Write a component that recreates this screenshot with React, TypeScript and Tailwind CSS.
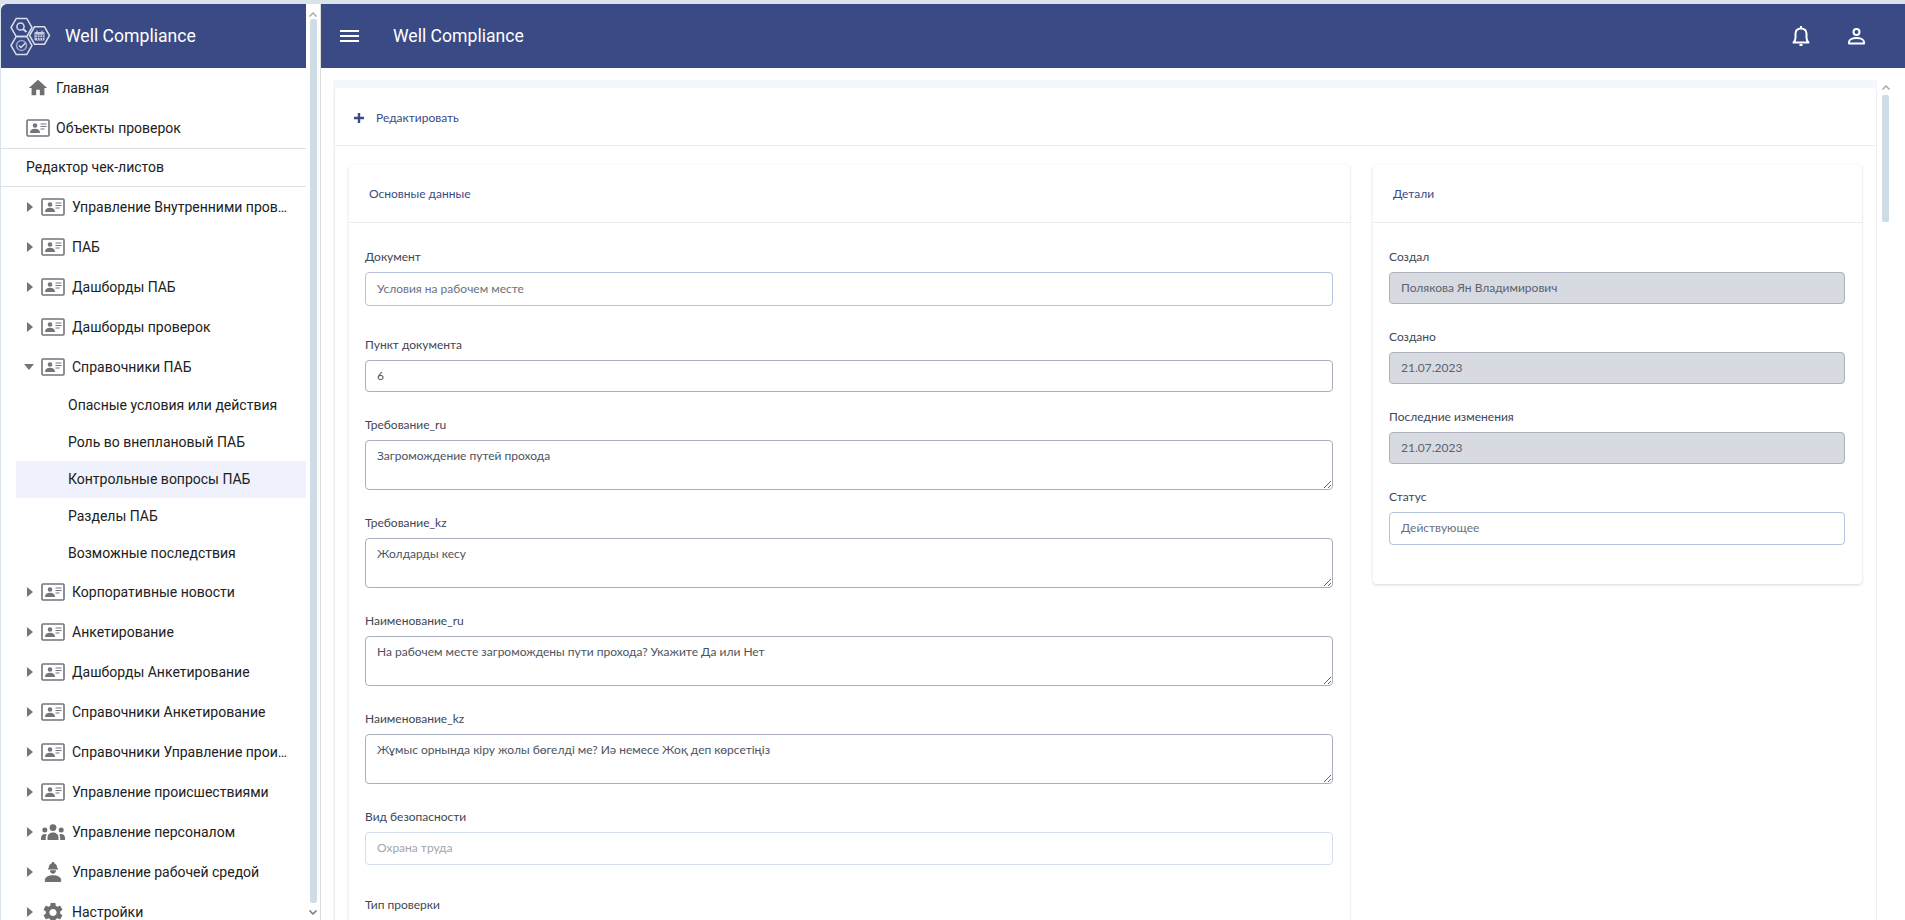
import React from "react";
import { MdHome, MdSettings } from "react-icons/md";

const Hex = ({ cx, cy, r }: { cx: number; cy: number; r: number }) => {
  const h = r * 0.866;
  return (
    <polygon
      points={`${cx - r},${cy} ${cx - r / 2},${cy - h} ${cx + r / 2},${cy - h} ${cx + r},${cy} ${cx + r / 2},${cy + h} ${cx - r / 2},${cy + h}`}
      fill="none"
      stroke="#d9dcea"
      strokeWidth="1.5"
    />
  );
};

const Logo = () => (
  <svg width="42" height="42" viewBox="8 15 42 42" className="shrink-0">
    <Hex cx={20.5} cy={27.5} r={10.5} />
    <Hex cx={38.5} cy={35.5} r={10} />
    <Hex cx={20.5} cy={45.5} r={10.5} />
    <circle cx="19.5" cy="26.5" r="3.6" fill="none" stroke="#d9dcea" strokeWidth="1.5" />
    <path d="M22 29l3.5 3" stroke="#d9dcea" strokeWidth="2" />
    <rect x="33.5" y="32" width="10" height="8.5" rx="1" fill="#c9cde0" />
    <path d="M36 30.5v2M41 30.5v2" stroke="#c9cde0" strokeWidth="1.2" />
    <path d="M34 35h9M34 37.5h9M36.5 35v5M39 35v5M41.5 35v5" stroke="#3a4a85" strokeWidth="0.7" />
    <circle cx="20.5" cy="45.5" r="5" fill="none" stroke="#9aa3c6" strokeWidth="1.6" />
    <path d="M18 45.5l2 2 4.5-4.5" fill="none" stroke="#d9dcea" strokeWidth="1.5" />
  </svg>
);

const IdCard = () => (
  <svg width="24" height="18" viewBox="0 0 24 18" className="shrink-0">
    <rect x="1" y="1" width="22" height="16" rx="1" fill="none" stroke="#77727c" strokeWidth="1.6" />
    <circle cx="9" cy="6.5" r="2.3" fill="#77727c" />
    <path d="M4 14c0-3 2-4.2 5-4.2s5 1.2 5 4.2z" fill="#77727c" />
    <path d="M14.5 5h6M14.5 7.5h6M14.5 10h4" stroke="#77727c" strokeWidth="1" />
  </svg>
);

const People = () => (
  <svg width="24" height="16" viewBox="0 0 24 16" className="shrink-0" fill="#6f6f6f">
    <circle cx="12" cy="3.600" r="3.400" />
    <circle cx="3.800" cy="6" r="2.500" />
    <circle cx="20.200" cy="6" r="2.500" />
    <path d="M6.500 16v-2.500c0-3 2.500-5 5.500-5s5.500 2 5.500 5V16z" />
    <path d="M0 16v-2c0-2.500 1.800-4 3.800-4 .9 0 1.500.2 2 .5-.7 1-1 2-1 3.200V16z" />
    <path d="M24 16v-2c0-2.500-1.800-4-3.800-4-.9 0-1.500.2-2 .5.700 1 1 2 1 3.200V16z" />
  </svg>
);

const Worker = () => (
  <svg width="20" height="20" viewBox="3 1 18 21" className="shrink-0" fill="#6f6f6f">
    <path d="M7.5 7.5c0-3 1.700-4.800 3.400-5.200V1h2.200v1.300c1.700.4 3.400 2.200 3.400 5.200h.8v1.300h-10.600V7.500z" />
    <path d="M8.800 9.600h6.400c-.1 2.200-1.400 3.700-3.200 3.700s-3.100-1.500-3.200-3.700z" />
    <path d="M3.500 22v-2.500c0-2.600 3.800-4.600 8.500-4.600s8.500 2 8.500 4.600V22z" />
  </svg>
);

const Caret = ({ open }: { open?: boolean }) =>
  open ? (
    <svg width="10" height="6" viewBox="0 0 10 6" className="ml-[23px] mr-[7px] shrink-0">
      <path d="M0 0h10L5 6z" fill="#77727c" />
    </svg>
  ) : (
    <svg width="6" height="10" viewBox="0 0 6 10" className="ml-[26px] mr-2 shrink-0">
      <path d="M0 0l6 5-6 5z" fill="#77727c" />
    </svg>
  );

const TreeRow = ({
  label,
  icon = <IdCard />,
  open,
}: {
  label: string;
  icon?: React.ReactNode;
  open?: boolean;
}) => (
  <div className="flex h-10 shrink-0 items-center">
    <Caret open={open} />
    <div className="flex w-6 shrink-0 justify-center">{icon}</div>
    <span className="ml-[7px] w-[218px] truncate text-sm text-[#212121]">{label}</span>
  </div>
);

const SubRow = ({ label, active }: { label: string; active?: boolean }) => (
  <div className={`ml-[15px] flex h-[37px] shrink-0 items-center pb-[2px] pl-[52px] text-sm text-[#212121] ${active ? "bg-[#eff2fc]" : ""}`}>
    {label}
  </div>
);

const ScrollUp = () => (
  <svg width="8" height="5" viewBox="0 0 8 5" className="shrink-0">
    <path d="M0.500 4.500L4 1l3.500 3.500" fill="none" stroke="#a9a9a9" strokeWidth="1.500" />
  </svg>
);
const ScrollDown = () => (
  <svg width="8" height="5" viewBox="0 0 8 5" className="shrink-0">
    <path d="M0.500 0.500L4 4l3.500-3.500" fill="none" stroke="#777" strokeWidth="1.500" />
  </svg>
);

const Sidebar = () => (
  <aside className="flex h-full w-[319px] shrink-0">
    <div className="flex w-[305px] shrink-0 flex-col overflow-hidden bg-white font-['Roboto',sans-serif]">
      <div className="flex h-16 shrink-0 items-center rounded-tl-[6px] bg-[#3a4a85] pl-2 text-white">
        <Logo />
        <span className="ml-[14px] text-[17.6px]">Well Compliance</span>
      </div>
      <div className="flex h-10 shrink-0 items-center pl-[26px] text-sm text-[#212121]">
        <MdHome size={22} color="#6f6f6f" className="mr-[7px]" />
        Главная
      </div>
      <div className="flex h-10 shrink-0 items-center pl-[25px] text-sm text-[#212121]">
        <IdCard />
        <span className="ml-[6px]">Объекты проверок</span>
      </div>
      <div className="flex h-[39px] shrink-0 items-center border-y border-[#e0e0e0] pb-px pl-[25px] text-sm text-[#212121]">
        Редактор чек-листов
      </div>
      <TreeRow label="Управление Внутренними проверками" />
      <TreeRow label="ПАБ" />
      <TreeRow label="Дашборды ПАБ" />
      <TreeRow label="Дашборды проверок" />
      <TreeRow label="Справочники ПАБ" open />
      <SubRow label="Опасные условия или действия" />
      <SubRow label="Роль во внеплановый ПАБ" />
      <SubRow label="Контрольные вопросы ПАБ" active />
      <SubRow label="Разделы ПАБ" />
      <SubRow label="Возможные последствия" />
      <TreeRow label="Корпоративные новости" />
      <TreeRow label="Анкетирование" />
      <TreeRow label="Дашборды Анкетирование" />
      <TreeRow label="Справочники Анкетирование" />
      <TreeRow label="Справочники Управление происшествиями" />
      <TreeRow label="Управление происшествиями" />
      <TreeRow label="Управление персоналом" icon={<People />} />
      <TreeRow label="Управление рабочей средой" icon={<Worker />} />
      <TreeRow label="Настройки" icon={<MdSettings size={25} color="#6f6f6f" />} />
    </div>
    <div className="flex w-[14px] shrink-0 flex-col items-center bg-white pt-[8px]">
      <ScrollUp />
      <div className="mt-[2px] h-[884px] w-[7px] rounded-[2px] bg-[#cfdbe5]" />
      <div className="mt-[7px]">
        <ScrollDown />
      </div>
    </div>
  </aside>
);

const labelCls = "block text-xs leading-[15px] text-[#3f4654]";

const Field = ({
  label,
  value,
  h,
  mt,
  variant = "normal",
}: {
  label: string;
  value: string;
  h: string;
  mt: string;
  variant?: "normal" | "blue" | "muted" | "disabled";
}) => {
  const cls = {
    normal: "border-[#a9afbf] bg-white text-[#4c5361]",
    blue: "border-[#b5c3de] bg-white text-[#6b7280]",
    muted: "border-[#d5deec] bg-white text-[#a3a6ab]",
    disabled: "border-[#abb0bc] bg-[#d7dae0] text-[#5b6270]",
  }[variant];
  return (
    <div className={mt}>
      <label className={labelCls}>{label}</label>
      <input
        readOnly
        value={value}
        className={`mt-2 block w-full rounded-[4px] border px-[11px] pb-[2px] text-xs outline-none ${h} ${cls}`}
      />
    </div>
  );
};

const Area = ({ label, value, mt }: { label: string; value: string; mt: string }) => (
  <div className={mt}>
    <label className={labelCls}>{label}</label>
    <textarea
      readOnly
      value={value}
      className="mt-2 block h-[50px] w-full rounded-[4px] border border-[#a9afbf] bg-white px-[11px] pb-[9px] pt-[7px] text-xs text-[#4c5361] outline-none"
    />
  </div>
);

const Card = ({
  title,
  titlePl,
  className,
  children,
}: {
  title: string;
  titlePl: string;
  className: string;
  children: React.ReactNode;
}) => (
  <section className={`rounded-[4px] bg-white shadow-[0_1px_3px_rgba(60,70,100,0.22)] ${className}`}>
    <div className={`flex h-[58px] items-center border-b border-[#ececf1] text-xs text-[#3a4a85] ${titlePl}`}>{title}</div>
    {children}
  </section>
);

const Main = () => (
  <main className="flex h-full min-w-0 flex-1 flex-col border-l border-[#dcdcdc] bg-white">
    <header className="flex h-16 shrink-0 items-center bg-[#3a4a85] font-['Roboto',sans-serif] text-white">
      <svg width="19" height="13" viewBox="0 0 19 13" className="ml-[19px]">
        <path d="M0 1h19M0 6h19M0 11h19" stroke="#fff" strokeWidth="2" />
      </svg>
      <span className="ml-[34px] text-[17.6px]">Well Compliance</span>
      <svg width="20" height="22" viewBox="0 0 20 22" className="ml-auto">
        <path d="M2.500 17.500h15c-1.500-1.500-2-3-2-5V9c0-3.500-2.300-5.500-5.500-5.500S4.500 5.500 4.500 9v3.500c0 2-.5 3.500-2 5z" fill="none" stroke="#fff" strokeWidth="2" strokeLinejoin="round" />
        <path d="M10 1v2.500M8.500 20h3" stroke="#fff" strokeWidth="2" />
      </svg>
      <svg width="18" height="18" viewBox="0 0 18 18" className="ml-[37px] mr-[39px]">
        <circle cx="8.500" cy="5" r="3" fill="none" stroke="#fff" strokeWidth="2" />
        <path d="M1 16.500v-1.500c0-2.500 3.500-4 7.500-4s7.500 1.500 7.500 4v1.500z" fill="none" stroke="#fff" strokeWidth="2" strokeLinejoin="round" />
      </svg>
    </header>
    <div className="flex min-h-0 flex-1 overflow-hidden font-['Lato',sans-serif]">
      <div className="ml-3 mt-3 w-[1544px] shrink-0 bg-[#f4f7fe] pt-2">
        <div className="ml-px rounded-t-[4px] border-x border-[#eeeef2] bg-white pb-10">
          <div className="flex h-[58px] items-center border-b border-[#ececf1] pl-[19px] pt-[2px] text-xs text-[#3a4a85]">
            <svg width="10" height="10" viewBox="0 0 10 10" className="mr-[12px]">
              <path d="M5 0v10M0 5h10" stroke="#3a4a85" strokeWidth="2.400" />
            </svg>
            Редактировать
          </div>
          <div className="flex items-start gap-[23px] pl-[14px] pt-[19px]">
            <Card title="Основные данные" titlePl="pl-5" className="w-[1001px] shrink-0 pb-10">
              <div className="pl-4 pr-[17px] pt-[26px]">
                <Field label="Документ" value="Условия на рабочем месте" h="h-[34px]" mt="" variant="blue" />
                <Field label="Пункт документа" value="6" h="h-[32px]" mt="mt-[31px]" />
                <Area label="Требование_ru" value="Загромождение путей прохода" mt="mt-[25px]" />
                <Area label="Требование_kz" value="Жолдарды кесу" mt="mt-[25px]" />
                <Area label="Наименование_ru" value="На рабочем месте загромождены пути прохода? Укажите Да или Нет" mt="mt-[25px]" />
                <Area label="Наименование_kz" value="Жұмыс орнында кіру жолы бөгелді ме? Иә немесе Жоқ деп көрсетіңіз" mt="mt-[25px]" />
                <Field label="Вид безопасности" value="Охрана труда" h="h-[33px]" mt="mt-[25px]" variant="muted" />
                <Field label="Тип проверки" value="" h="h-[33px]" mt="mt-[32px]" variant="muted" />
              </div>
            </Card>
            <Card title="Детали" titlePl="pl-[20px]" className="w-[489px] shrink-0 pb-[39px]">
              <div className="pl-4 pr-[17px] pt-[26px]">
                <Field label="Создал" value="Полякова Ян Владимирович" h="h-[32px]" mt="" variant="disabled" />
                <Field label="Создано" value="21.07.2023" h="h-[32px]" mt="mt-[25px]" variant="disabled" />
                <Field label="Последние изменения" value="21.07.2023" h="h-[32px]" mt="mt-[25px]" variant="disabled" />
                <Field label="Статус" value="Действующее" h="h-[33px]" mt="mt-[25px]" variant="blue" />
              </div>
            </Card>
          </div>
        </div>
      </div>
      <div className="ml-[5px] mt-[17px] flex w-[7px] shrink-0 flex-col items-center">
        <ScrollUp />
        <div className="mt-[5px] h-[127px] w-[7px] rounded-[2px] bg-[#cfdbe5]" />
      </div>
    </div>
  </main>
);

export default function App() {
  return (
    <div className="h-[920px] w-[1905px] overflow-hidden bg-[#d9e3ec] pl-px pt-1">
      <div className="flex h-[916px]">
        <Sidebar />
        <Main />
      </div>
    </div>
  );
}
